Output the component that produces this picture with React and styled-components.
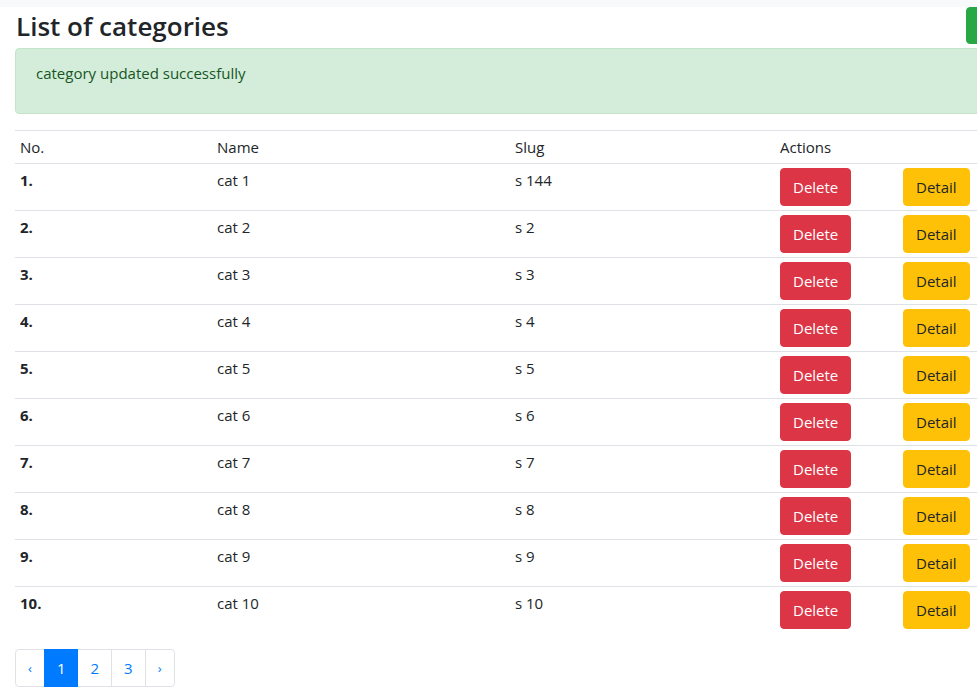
import styled, { createGlobalStyle } from 'styled-components';

const GlobalStyle = createGlobalStyle`
  html, body {
    margin: 0;
    padding: 0;
    overflow: hidden;
    background: #fff;
  }
  body {
    font-family: 'Open Sans', 'Liberation Sans', sans-serif;
    font-size: 15px;
    line-height: 24px;
    color: #212529;
  }
`;

const categories = Array.from({ length: 10 }, (_, i) => ({
  id: i + 1,
  name: `cat ${i + 1}`,
  slug: i === 0 ? 's 144' : `s ${i + 1}`,
}));

const App = () => {
  return (
    <>
      <GlobalStyle />
      <TopBar />
      <Wrapper>
        <div className='header'>
          <h2 className='title'>List of categories</h2>
          <button type='button' aria-label='Add category' className='btn btn-success' />
        </div>
        <div className='alert'>
          <p>category updated successfully</p>
        </div>
        <table className='table'>
          <colgroup>
            <col style={{ width: 197 }} />
            <col style={{ width: 298 }} />
            <col style={{ width: 265 }} />
            <col style={{ width: 123 }} />
            <col />
          </colgroup>
          <thead>
            <tr>
              <th>No.</th>
              <th>Name</th>
              <th>Slug</th>
              <th>Actions</th>
              <th></th>
            </tr>
          </thead>
          <tbody>
            {categories.map((item) => {
              return (
                <tr key={item.id}>
                  <td className='num'>{item.id}.</td>
                  <td>{item.name}</td>
                  <td>{item.slug}</td>
                  <td>
                    <button type='button' className='btn btn-danger'>
                      Delete
                    </button>
                  </td>
                  <td>
                    <button type='button' className='btn btn-warning'>
                      Detail
                    </button>
                  </td>
                </tr>
              );
            })}
          </tbody>
        </table>
        <Pagination>
          <PageItem>‹</PageItem>
          <PageItem active>1</PageItem>
          <PageItem>2</PageItem>
          <PageItem>3</PageItem>
          <PageItem>›</PageItem>
        </Pagination>
      </Wrapper>
    </>
  );
};

export default App;

const TopBar = styled.div`
  height: 7px;
  background: #f8f9fa;
`;

const Wrapper = styled.div`
  width: 1050px;
  padding: 0 0 0 15px;
  .header {
    display: flex;
    align-items: center;
    height: 37px;
    margin-bottom: 4px;
  }
  .title {
    flex: 0 0 950px;
    margin: 0;
    padding-left: 1px;
    font-size: 26px;
    font-weight: 600;
    line-height: 36px;
  }
  .btn {
    display: inline-block;
    font-family: inherit;
    font-size: 15px;
    line-height: 24px;
    padding: 6px 12px;
    border: 1px solid transparent;
    border-radius: 4px;
    cursor: pointer;
  }
  .btn-success {
    background: #28a745;
    border-color: #28a745;
    width: 110px;
    height: 37px;
  }
  .btn-danger {
    background: #dc3545;
    border-color: #dc3545;
    color: #fff;
  }
  .btn-warning {
    background: #ffc107;
    border-color: #ffc107;
    color: #212529;
  }
  .alert {
    background: #d4edda;
    border: 1px solid #c3e6cb;
    border-radius: 4px;
    color: #155724;
    padding: 12px 20px;
    margin-bottom: 16px;
    p {
      margin: 0 0 16px;
    }
  }
  .table {
    border-collapse: collapse;
    table-layout: fixed;
    width: 962px;
    margin-bottom: 16px;
  }
  .table th,
  .table td {
    box-sizing: border-box;
    text-align: left;
    vertical-align: top;
    padding: 4px 5px;
    border-top: 1px solid #dee2e6;
  }
  .table th {
    font-weight: 400;
  }
  .table td.num {
    font-weight: 700;
  }
`;

const Pagination = styled.ul`
  display: flex;
  list-style: none;
  margin: 0;
  padding: 0;
  font-size: 15px;
  line-height: 20px;
`;

const PageItem = styled.li`
  padding: 8px 12px;
  text-align: center;
  border: 1px solid ${(p) => (p.active ? '#007bff' : '#dee2e6')};
  margin-left: -1px;
  color: ${(p) => (p.active ? '#fff' : '#007bff')};
  background: ${(p) => (p.active ? '#007bff' : '#fff')};
  position: relative;
  z-index: ${(p) => (p.active ? 1 : 0)};
  &:first-child {
    margin-left: 0;
    border-radius: 4px 0 0 4px;
    font-size: 13px;
  }
  &:last-child {
    border-radius: 0 4px 4px 0;
    font-size: 13px;
  }
`;
